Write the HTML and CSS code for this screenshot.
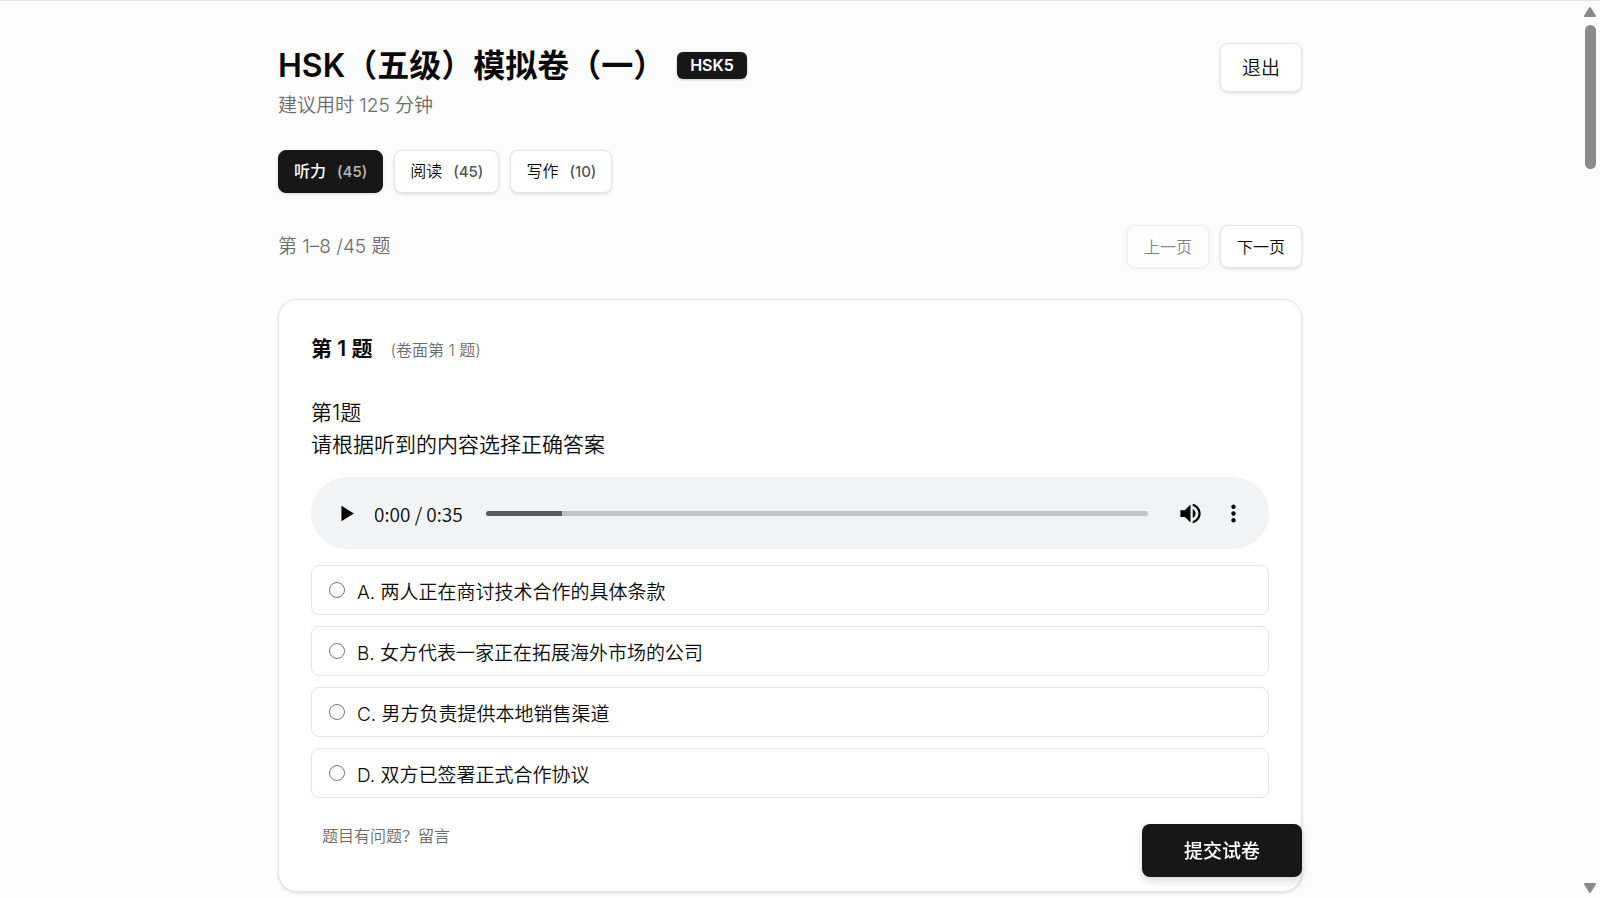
FILE: index.html
```
<!DOCTYPE html>
<html lang="zh-CN">
<head>
  <meta charset="UTF-8" />
  <meta name="viewport" content="width=device-width, initial-scale=1" />
  <title>HSK（五级）模拟卷（一）</title>
  <link rel="stylesheet" href="styles.css">
</head>
<body>
  <main class="container">
    <header class="exam-header">
      <div>
        <div class="title-row">
          <h1>HSK（五级）模拟卷（一）</h1>
          <span class="badge">HSK5</span>
        </div>
        <p class="muted">建议用时 125 分钟</p>
      </div>
      <button type="button" class="btn btn-exit">退出</button>
    </header>

    <nav class="tabs">
      <button type="button" class="btn active">听力<span class="count">(45)</span></button>
      <button type="button" class="btn">阅读<span class="count">(45)</span></button>
      <button type="button" class="btn">写作<span class="count">(10)</span></button>
    </nav>

    <div class="pager">
      <p class="muted">第 1–8 /45 题</p>
      <div class="pager-buttons">
        <button type="button" class="btn" disabled>上一页</button>
        <button type="button" class="btn">下一页</button>
      </div>
    </div>

    <section class="card">
      <div class="question-head">
        <h2>第 1 题</h2>
        <span class="sub">(卷面第 1 题)</span>
      </div>
      <p class="prompt">第1题<br>请根据听到的内容选择正确答案</p>

      <div class="player">
        <button type="button" class="icon-btn" aria-label="播放">
          <svg width="27" height="27" viewBox="0 0 24 24"><path d="M7.5 5.2v13.6L18.5 12z"/></svg>
        </button>
        <span class="time">0:00 / 0:35</span>
        <input type="range" class="seek" min="0" max="35" value="4" aria-label="进度">
        <button type="button" class="icon-btn" aria-label="音量">
          <svg width="27" height="27" viewBox="0 0 24 24"><path d="M3 9v6h4l5 5V4L7 9H3zm13.5 3c0-1.77-1.02-3.29-2.5-4.03v8.05c1.48-.73 2.5-2.25 2.5-4.02zM14 3.23v2.06c2.89.86 5 3.54 5 6.71s-2.11 5.85-5 6.71v2.06c4.01-.91 7-4.49 7-8.77s-2.99-7.86-7-8.77z"/></svg>
        </button>
        <button type="button" class="icon-btn" aria-label="更多">
          <svg width="27" height="27" viewBox="0 0 24 24"><path d="M12 8c1.1 0 2-.9 2-2s-.9-2-2-2-2 .9-2 2 .9 2 2 2zm0 2c-1.1 0-2 .9-2 2s.9 2 2 2 2-.9 2-2-.9-2-2-2zm0 6c-1.1 0-2 .9-2 2s.9 2 2 2 2-.9 2-2-.9-2-2-2z"/></svg>
        </button>
      </div>

      <div class="options">
        <label><input type="radio" name="q1" value="A"><span>A. 两人正在商讨技术合作的具体条款</span></label>
        <label><input type="radio" name="q1" value="B"><span>B. 女方代表一家正在拓展海外市场的公司</span></label>
        <label><input type="radio" name="q1" value="C"><span>C. 男方负责提供本地销售渠道</span></label>
        <label><input type="radio" name="q1" value="D"><span>D. 双方已签署正式合作协议</span></label>
      </div>

      <button type="button" class="report">题目有问题？留言</button>
    </section>
  </main>

  <button type="button" class="submit">提交试卷</button>

  <div class="scrollbar" aria-hidden="true">
    <svg width="14" height="12" viewBox="0 0 14 12"><path d="M7 2l5 8H2z"/></svg>
    <div class="thumb"></div>
    <svg class="down" width="14" height="12" viewBox="0 0 14 12"><path d="M2 2h10l-5 8z"/></svg>
  </div>
</body>
</html>
```

FILE: styles.css
```
* {
  box-sizing: border-box;
}
body {
  margin: 0;
  padding: 0 20px 0 0;
  border-top: 1px solid #e5e5e5;
  background-color: #fcfcfc;
  color: #0a0a0a;
  font-family: Inter, "Noto Sans CJK SC", sans-serif;
  font-weight: 350;
  font-size: 19px;
}
h1, h2, p {
  margin: 0;
}
button {
  font-family: inherit;
  cursor: pointer;
}
.container {
  max-width: 1024px;
  margin: 0 auto;
  padding: 42px 0 6px;
}
.exam-header {
  display: flex;
  justify-content: space-between;
  align-items: flex-start;
}
.title-row {
  display: flex;
  align-items: center;
  gap: 12px;
}
h1 {
  font-size: 32px;
  line-height: 45px;
  font-weight: 600;
}
.badge {
  padding: 0 13px;
  border-radius: 6px;
  background: #171717;
  color: #fff;
  font-size: 16px;
  line-height: 27px;
  font-weight: 600;
  box-shadow: 0 1px 3px rgba(0, 0, 0, 0.2);
}
.muted {
  color: #6b6b6b;
  font-size: 19px;
  line-height: 36px;
}
.btn {
  height: 43px;
  padding: 0 16px 2px;
  border: 1px solid #e5e5e5;
  border-radius: 8px;
  background: #fff;
  color: #0a0a0a;
  font-size: 16px;
  font-weight: 350;
  box-shadow: 0 1px 3px rgba(0, 0, 0, 0.14);
}
.btn:disabled {
  opacity: 0.5;
  cursor: default;
}
.btn-exit {
  height: 49px;
  padding: 0 21px 2px;
  font-size: 19px;
}
.tabs {
  display: flex;
  gap: 11px;
  margin-top: 26px;
}
.tabs .btn {
  padding: 0 15px 3px;
}
.tabs .active {
  background: #171717;
  border-color: #171717;
  color: #fff;
  font-weight: 500;
}
.count {
  margin-left: 11px;
  font-size: 15px;
  font-weight: 500;
  opacity: 0.7;
}
.pager {
  display: flex;
  justify-content: space-between;
  align-items: center;
  margin-top: 32px;
}
.pager-buttons {
  display: flex;
  gap: 11px;
}
.card {
  margin-top: 31px;
  padding: 33px 32px;
  border: 1px solid #e5e5e5;
  border-radius: 19px;
  background: #fff;
  box-shadow: 0 1px 3px rgba(0, 0, 0, 0.14);
}
.question-head {
  display: flex;
  align-items: baseline;
  gap: 18px;
}
h2 {
  font-size: 21px;
  line-height: 32px;
  font-weight: 600;
}
.sub {
  color: #6b6b6b;
  font-size: 16px;
}
.prompt {
  margin-top: 32px;
  font-size: 21px;
  line-height: 32px;
}
.player {
  display: flex;
  align-items: center;
  height: 72px;
  margin-top: 16px;
  padding: 0 22px;
  border-radius: 36px;
  background: #f1f3f4;
}
.icon-btn {
  display: flex;
  padding: 0;
  border: none;
  background: none;
}
.time {
  margin: 0 23px 0 14px;
  font-family: "Noto Sans CJK SC", sans-serif;
}
.seek {
  flex: 1;
  height: 5px;
  margin: 0 29px 0 0;
  border-radius: 3px;
  appearance: none;
  background: linear-gradient(to right, #5a5b5c 11.5%, #c1c2c3 11.5%);
}
.seek::-webkit-slider-thumb {
  appearance: none;
  width: 0;
  height: 0;
}
.icon-btn + .icon-btn {
  margin-left: 16px;
}
.options {
  display: grid;
  gap: 11px;
  margin-top: 16px;
}
.options label {
  display: flex;
  align-items: center;
  gap: 12px;
  height: 50px;
  padding: 0 17px;
  border: 1px solid #e5e5e5;
  border-radius: 8px;
}
.options input {
  width: 16px;
  height: 16px;
  margin: 0;
}
.report {
  display: block;
  margin-top: 17px;
  padding: 0 11px;
  border: none;
  background: none;
  color: #6b6b6b;
  font-size: 16px;
  line-height: 43px;
  font-weight: 350;
}
.submit {
  position: fixed;
  right: max(20px, calc(50% - 502px));
  bottom: 21px;
  height: 53px;
  padding: 0 42px 2px;
  border: none;
  border-radius: 8px;
  background: #171717;
  color: #fff;
  font-size: 19px;
  font-weight: 500;
  box-shadow: 0 4px 8px rgba(0, 0, 0, 0.15);
}
.scrollbar {
  position: fixed;
  top: 0;
  right: 0;
  bottom: 0;
  display: flex;
  flex-direction: column;
  align-items: center;
  width: 20px;
  padding: 6px 0 4px;
}
.scrollbar svg {
  fill: #8a8a8a;
  stroke: #8a8a8a;
  stroke-width: 2;
  stroke-linejoin: round;
}
.thumb {
  width: 11px;
  height: 144px;
  margin-top: 7px;
  border-radius: 6px;
  background: #8a8a8a;
}
.down {
  margin-top: auto;
}
```
